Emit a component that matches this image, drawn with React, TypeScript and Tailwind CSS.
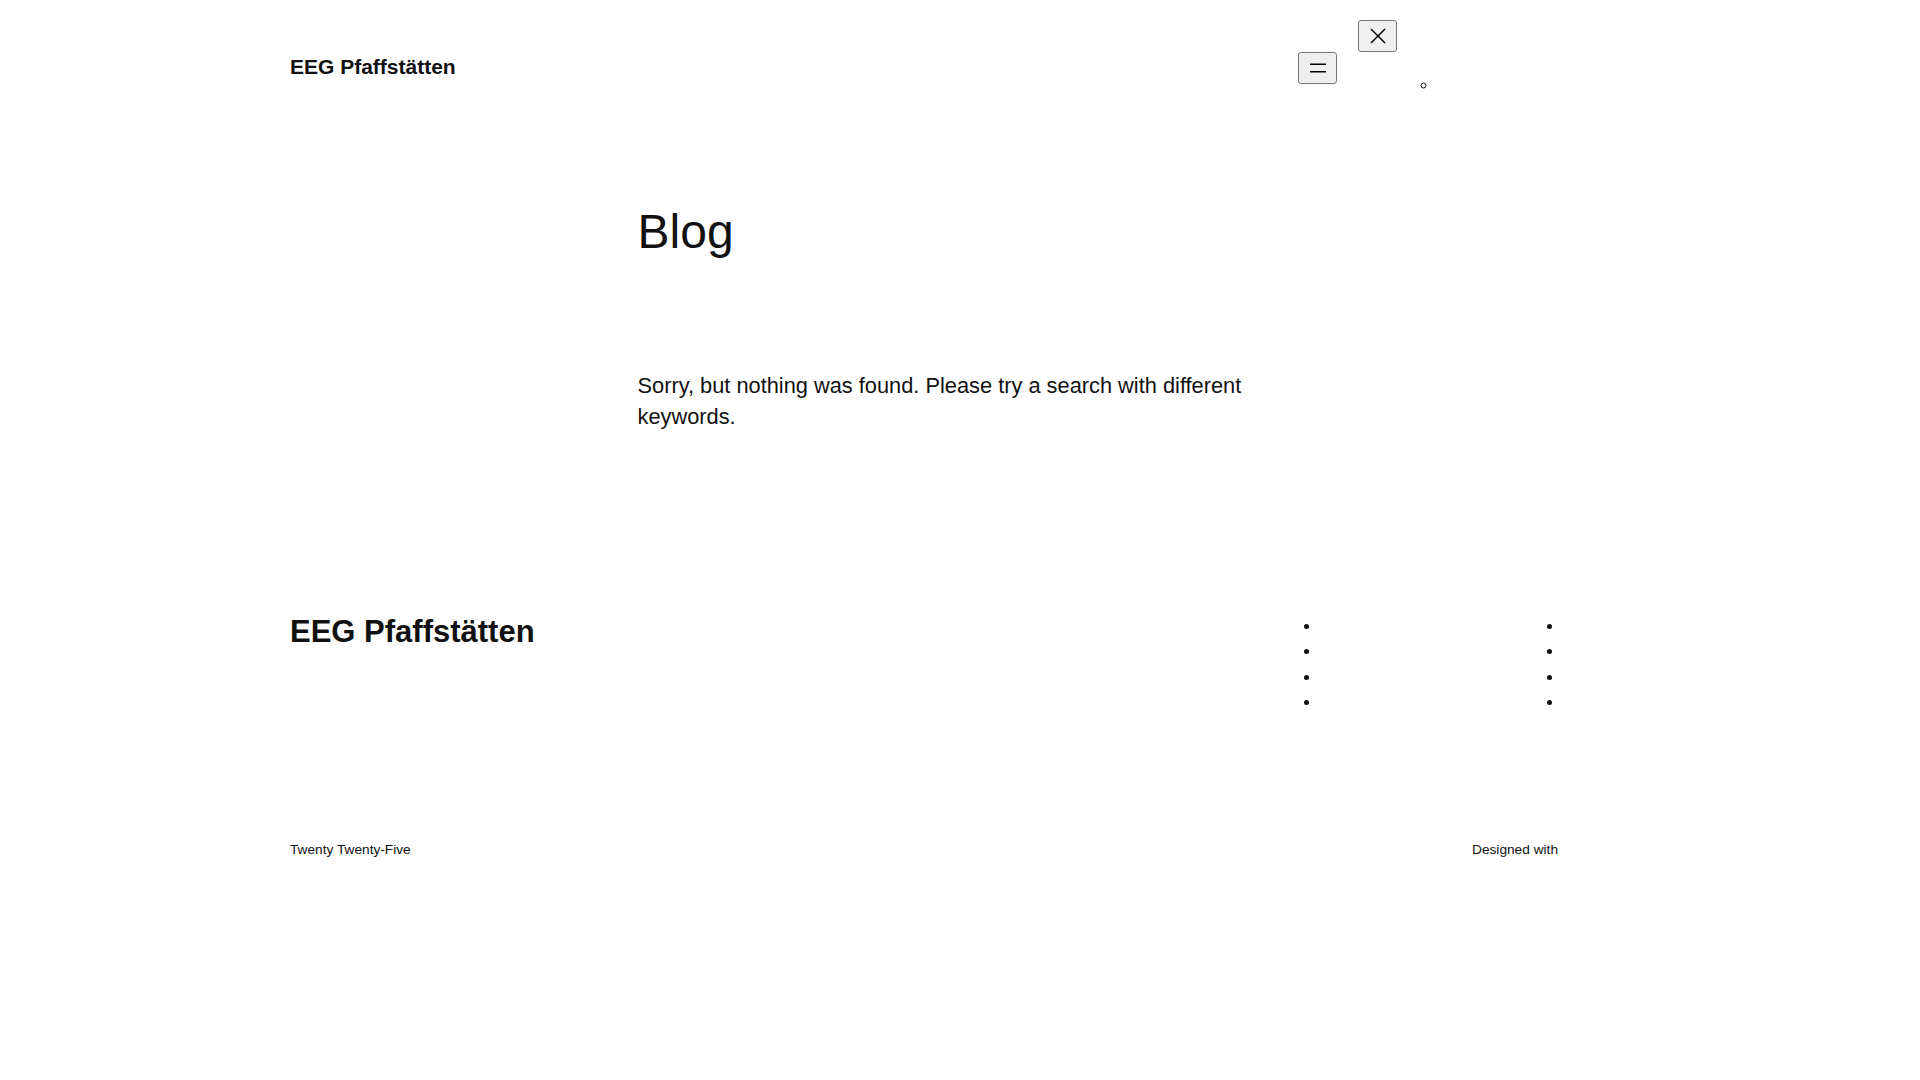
import React from "react";

function MenuIcon() {
  return (
    <svg width="24" height="24" viewBox="0 0 24 24" className="block" fill="currentColor" aria-hidden="true">
      <path d="M4 7.5h16v1.5H4z" />
      <path d="M4 15h16v1.5H4z" />
    </svg>
  );
}

function CloseIcon() {
  return (
    <svg width="24" height="24" viewBox="0 0 24 24" className="block" fill="currentColor" aria-hidden="true">
      <path d="m13.06 12 6.47-6.47-1.06-1.06L12 10.94 5.53 4.47 4.47 5.53 10.94 12l-6.47 6.47 1.06 1.06L12 13.06l6.47 6.47 1.06-1.06L13.06 12Z" />
    </svg>
  );
}

const btn =
  "flex items-center justify-center w-[39px] h-[32px] bg-[#efefef] border border-[#767676] rounded-[3px] text-black";

export default function App() {
  return (
    <div className="min-h-screen bg-white text-[#111111] font-['Liberation_Sans',Arial,sans-serif]">
      <header className="mx-auto w-[1340px] h-[100px] flex items-start justify-between">
        <p className="mt-[52px] text-[21px] leading-[29px] font-bold">EEG Pfaffstätten</p>
        <nav className="flex items-start gap-[21px]">
          <button className={`${btn} mt-[52px]`} aria-label="Menü öffnen">
            <MenuIcon />
          </button>
          <div className="w-[272px] flex flex-col pt-[20px]">
            <button className={btn} aria-label="Menü schließen">
              <CloseIcon />
            </button>
            <ul className="list-[circle] pl-[80px] mt-[19.5px] text-[18px] leading-[25px]">
              <li className="h-[25px]"></li>
            </ul>
          </div>
        </nav>
      </header>

      <main className="mx-auto w-[645px] pt-[103px]">
        <h1 className="text-[48px] leading-[57.6px] font-normal">Blog</h1>
        <p className="mt-[110.5px] text-[21.8px] leading-[30.8px]">
          Sorry, but nothing was found. Please try a search with different keywords.
        </p>
      </main>

      <footer className="mx-auto w-[1340px] pt-[179px]">
        <div className="flex items-start justify-between">
          <p className="mt-[1px] text-[31px] leading-[37px] font-bold">EEG Pfaffstätten</p>
          <div className="grid grid-cols-[243px_97px] pt-[1px] text-[18px] leading-[25.5px]">
            <ul className="list-disc pl-[31px]">
              <li className="h-[25.5px]"></li>
              <li className="h-[25.5px]"></li>
              <li className="h-[25.5px]"></li>
              <li className="h-[25.5px]"></li>
            </ul>
            <ul className="list-disc pl-[31px]">
              <li className="h-[25.5px]"></li>
              <li className="h-[25.5px]"></li>
              <li className="h-[25.5px]"></li>
              <li className="h-[25.5px]"></li>
            </ul>
          </div>
        </div>
        <div className="mt-[125.5px] flex items-start justify-between text-[13.7px] leading-[19px] pb-[40px]">
          <p>Twenty Twenty-Five</p>
          <p className="pr-[72px]">Designed with</p>
        </div>
      </footer>
    </div>
  );
}
